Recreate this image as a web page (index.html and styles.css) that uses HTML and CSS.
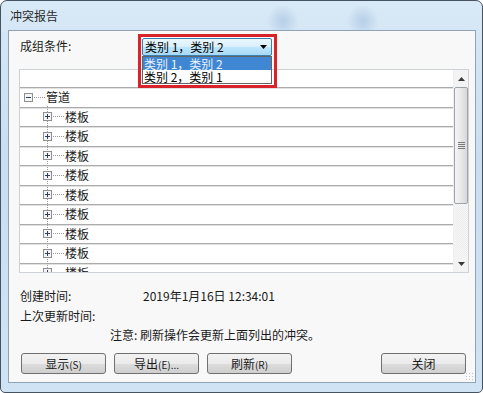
FILE: index.html
```html
<!DOCTYPE html>
<html lang="zh-CN">
<head>
<meta charset="utf-8">
<title>冲突报告</title>
<link rel="stylesheet" href="styles.css">
</head>
<body>
<div class="window">
  <div class="titlebar"><span class="title">冲突报告</span></div>
  <div class="client">
    <div class="cond-row">
      <span class="label">成组条件:</span>
      <div class="combo-wrap">
        <div class="combo">
          <span class="combo-text">类别 1，类别 2</span>
          <svg class="combo-arrow" width="7" height="4" viewBox="0 0 7 4"><path d="M0 0H7L3.5 4Z" fill="#000"/></svg>
        </div>
        <ul class="dropdown">
          <li class="opt selected">类别 1，类别 2</li>
          <li class="opt">类别 2，类别 1</li>
        </ul>
        <div class="highlight"></div>
      </div>
    </div>

    <div class="panel">
      <div class="tree">
        <div class="vline"></div>
        <div class="row blank"></div>
        <div class="row root">
          <svg class="box" width="9" height="9" viewBox="0 0 9 9"><rect x="0.5" y="0.5" width="8" height="8" fill="#f4f4f4" stroke="#8f8f8f"/><path d="M2 4.5H7" stroke="#2b3f66"/></svg>
          <span class="dots"></span>
          <span class="txt">管道</span>
        </div>
        <div class="row child"><svg class="box" width="9" height="9" viewBox="0 0 9 9"><rect x="0.5" y="0.5" width="8" height="8" fill="#f4f4f4" stroke="#8f8f8f"/><path d="M2 4.5H7M4.5 2V7" stroke="#2b3f66"/></svg><span class="dots"></span><span class="txt">楼板</span></div>
        <div class="row child"><svg class="box" width="9" height="9" viewBox="0 0 9 9"><rect x="0.5" y="0.5" width="8" height="8" fill="#f4f4f4" stroke="#8f8f8f"/><path d="M2 4.5H7M4.5 2V7" stroke="#2b3f66"/></svg><span class="dots"></span><span class="txt">楼板</span></div>
        <div class="row child"><svg class="box" width="9" height="9" viewBox="0 0 9 9"><rect x="0.5" y="0.5" width="8" height="8" fill="#f4f4f4" stroke="#8f8f8f"/><path d="M2 4.5H7M4.5 2V7" stroke="#2b3f66"/></svg><span class="dots"></span><span class="txt">楼板</span></div>
        <div class="row child"><svg class="box" width="9" height="9" viewBox="0 0 9 9"><rect x="0.5" y="0.5" width="8" height="8" fill="#f4f4f4" stroke="#8f8f8f"/><path d="M2 4.5H7M4.5 2V7" stroke="#2b3f66"/></svg><span class="dots"></span><span class="txt">楼板</span></div>
        <div class="row child"><svg class="box" width="9" height="9" viewBox="0 0 9 9"><rect x="0.5" y="0.5" width="8" height="8" fill="#f4f4f4" stroke="#8f8f8f"/><path d="M2 4.5H7M4.5 2V7" stroke="#2b3f66"/></svg><span class="dots"></span><span class="txt">楼板</span></div>
        <div class="row child"><svg class="box" width="9" height="9" viewBox="0 0 9 9"><rect x="0.5" y="0.5" width="8" height="8" fill="#f4f4f4" stroke="#8f8f8f"/><path d="M2 4.5H7M4.5 2V7" stroke="#2b3f66"/></svg><span class="dots"></span><span class="txt">楼板</span></div>
        <div class="row child"><svg class="box" width="9" height="9" viewBox="0 0 9 9"><rect x="0.5" y="0.5" width="8" height="8" fill="#f4f4f4" stroke="#8f8f8f"/><path d="M2 4.5H7M4.5 2V7" stroke="#2b3f66"/></svg><span class="dots"></span><span class="txt">楼板</span></div>
        <div class="row child"><svg class="box" width="9" height="9" viewBox="0 0 9 9"><rect x="0.5" y="0.5" width="8" height="8" fill="#f4f4f4" stroke="#8f8f8f"/><path d="M2 4.5H7M4.5 2V7" stroke="#2b3f66"/></svg><span class="dots"></span><span class="txt">楼板</span></div>
        <div class="row child"><svg class="box" width="9" height="9" viewBox="0 0 9 9"><rect x="0.5" y="0.5" width="8" height="8" fill="#f4f4f4" stroke="#8f8f8f"/><path d="M2 4.5H7M4.5 2V7" stroke="#2b3f66"/></svg><span class="dots"></span><span class="txt">楼板</span></div>
      </div>
      <div class="scrollbar">
        <div class="sb-btn"><svg width="7" height="4" viewBox="0 0 7 4"><path d="M3.5 0L7 4H0Z" fill="#3a3a3a"/></svg></div>
        <div class="sb-track">
          <div class="thumb">
            <div class="grip"><i></i><i></i><i></i><i></i></div>
          </div>
        </div>
        <div class="sb-btn"><svg width="7" height="4" viewBox="0 0 7 4"><path d="M0 0H7L3.5 4Z" fill="#3a3a3a"/></svg></div>
      </div>
    </div>

    <div class="info">
      <span class="k">创建时间:</span><span class="v">2019年1月16日 12:34:01</span>
      <span class="k">上次更新时间:</span><span class="v"></span>
    </div>
    <div class="note">注意: 刷新操作会更新上面列出的冲突。</div>

    <div class="buttons">
      <button class="btn">显示<small>(S)</small></button>
      <button class="btn">导出<small>(E)...</small></button>
      <button class="btn">刷新<small>(R)</small></button>
      <span class="spacer"></span>
      <button class="btn">关闭</button>
    </div>
    <div class="grip-corner"></div>
  </div>
</div>
</body>
</html>
```

FILE: styles.css
```css
* { box-sizing: border-box; }
html, body { margin: 0; padding: 0; background: #ffffff; }
body {
  font-family: "Noto Sans CJK SC", "Noto Sans", sans-serif;
  font-size: 12px;
  color: #1a1a1a;
}
.window {
  width: 483px;
  height: 393px;
  border: 1px solid #45525f;
  border-radius: 7px 7px 5px 5px;
  background:
    radial-gradient(circle at 282px 20px, rgba(120,160,200,0.35) 0, rgba(120,160,200,0) 16px),
    radial-gradient(circle at 362px 20px, rgba(120,160,200,0.35) 0, rgba(120,160,200,0) 16px),
    linear-gradient(#d8e9f7, #c9def1 40%, #cfe3f4 100%);
  padding: 0 6px 9px 7px;
  display: flex;
  flex-direction: column;
}
.titlebar {
  height: 29px;
  display: flex;
  align-items: center;
  padding-left: 2px;
  padding-bottom: 1px;
}
.title { font-size: 12px; color: #2a2a2a; letter-spacing: 0; }
.client {
  flex: 1;
  position: relative;
  background: #f8f8f8;
  border: 1px solid #8fa3b7;
  display: flex;
  flex-direction: column;
}
.cond-row {
  display: grid;
  grid-template-columns: 122px 130px;
  padding: 7px 0 0 11px;
  height: 26px;
  position: relative;
  z-index: 5;
}
.label { line-height: 14px; padding-top: 1px; }
.combo-wrap { position: relative; height: 18px; }
.combo {
  height: 18px;
  border: 1px solid #3c7fb1;
  border-radius: 2px;
  background: linear-gradient(#eaf6fd, #d9f0fc 50%, #bee6fd 51%, #a7d9f5);
  display: flex;
  align-items: center;
  padding-left: 2px;
}
.combo-text { flex: 1; line-height: 14px; color: #000; }
.combo-arrow { margin-right: 4px; }
.dropdown {
  position: absolute;
  left: 0; top: 18px;
  width: 130px;
  margin: 0; padding: 0;
  list-style: none;
  border: 1px solid #646464;
  background: #fff;
}
.opt { height: 13px; line-height: 13px; padding-left: 1px; color: #000; }
.opt.selected { background: #3f86d3; color: #eaf2ff; }
.highlight {
  position: absolute;
  left: -4px; top: -4px;
  width: 139px; height: 54px;
  border: 3px solid #d9232b;
  pointer-events: none;
}
.panel {
  margin: 12px 6px 0 10px;
  height: 204px;
  border: 1px solid #cdd2d8;
  background: #fff;
  display: flex;
  overflow: hidden;
}
.tree { flex: 1; position: relative; overflow: hidden; }
.vline {
  position: absolute;
  left: 27px; top: 36px; bottom: 0;
  border-left: 1px dotted #9a9a9a;
  z-index: 2;
}
.row {
  height: 19.5px;
  border-bottom: 1px solid #ababab;
  box-shadow: 0 1px 0 #e2e2e2;
  display: flex;
  align-items: center;
}
.row.blank { height: 18px; }
.box { flex: none; position: relative; z-index: 3; }
.root { padding-left: 4px; }
.child { padding-left: 23px; }
.dots { width: 11px; border-top: 1px dotted #9a9a9a; margin: 0 1px 0 1px; }
.txt { line-height: 14px; color: #1a1a1a; }
.scrollbar {
  width: 15px;
  flex: none;
  display: flex;
  flex-direction: column;
  background: #f3f3f3;
  border-left: 1px solid #f0f0f0;
}
.sb-btn { height: 17px; display: flex; align-items: center; justify-content: center; }
.sb-track {
  flex: 1;
  background-color: #f4f4f4;
  background-image: repeating-conic-gradient(#ececec 0 25%, #f8f8f8 0 50%);
  background-size: 2px 2px;
}
.thumb {
  margin: 0 0 0 0;
  height: 117px;
  border: 1px solid #9ba3ab;
  border-radius: 2px;
  background: linear-gradient(90deg, #f5f5f5, #e8e8e8 50%, #d8d8d8);
  display: flex;
  align-items: center;
  justify-content: center;
}
.grip { display: flex; flex-direction: column; gap: 1px; }
.grip i { display: block; width: 7px; height: 1px; background: #7a7a7a; }
.info {
  display: grid;
  grid-template-columns: 123px 1fr;
  padding: 13px 0 0 11px;
  line-height: 19.5px;
}
.note { padding-left: 101px; line-height: 19.5px; }
.buttons {
  display: flex;
  gap: 8px;
  padding: 8px 9px 0 12px;
}
.spacer { flex: 1; }
.btn {
  width: 85px;
  height: 21px;
  padding: 0;
  border: 1px solid #707070;
  border-radius: 3px;
  background: linear-gradient(#f2f2f2, #ebebeb 50%, #dddddd 51%, #cfcfcf);
  font-family: "Noto Sans CJK SC", "Noto Sans", sans-serif;
  font-size: 12px;
  color: #1a1a1a;
  line-height: 19px;
}
.btn small { font-size: 10px; }
.grip-corner {
  position: absolute;
  right: 2px; bottom: 2px;
  width: 8px; height: 8px;
  background-image: radial-gradient(circle, #b8c4cf 0.8px, transparent 1px);
  background-size: 3px 3px;
}
```
